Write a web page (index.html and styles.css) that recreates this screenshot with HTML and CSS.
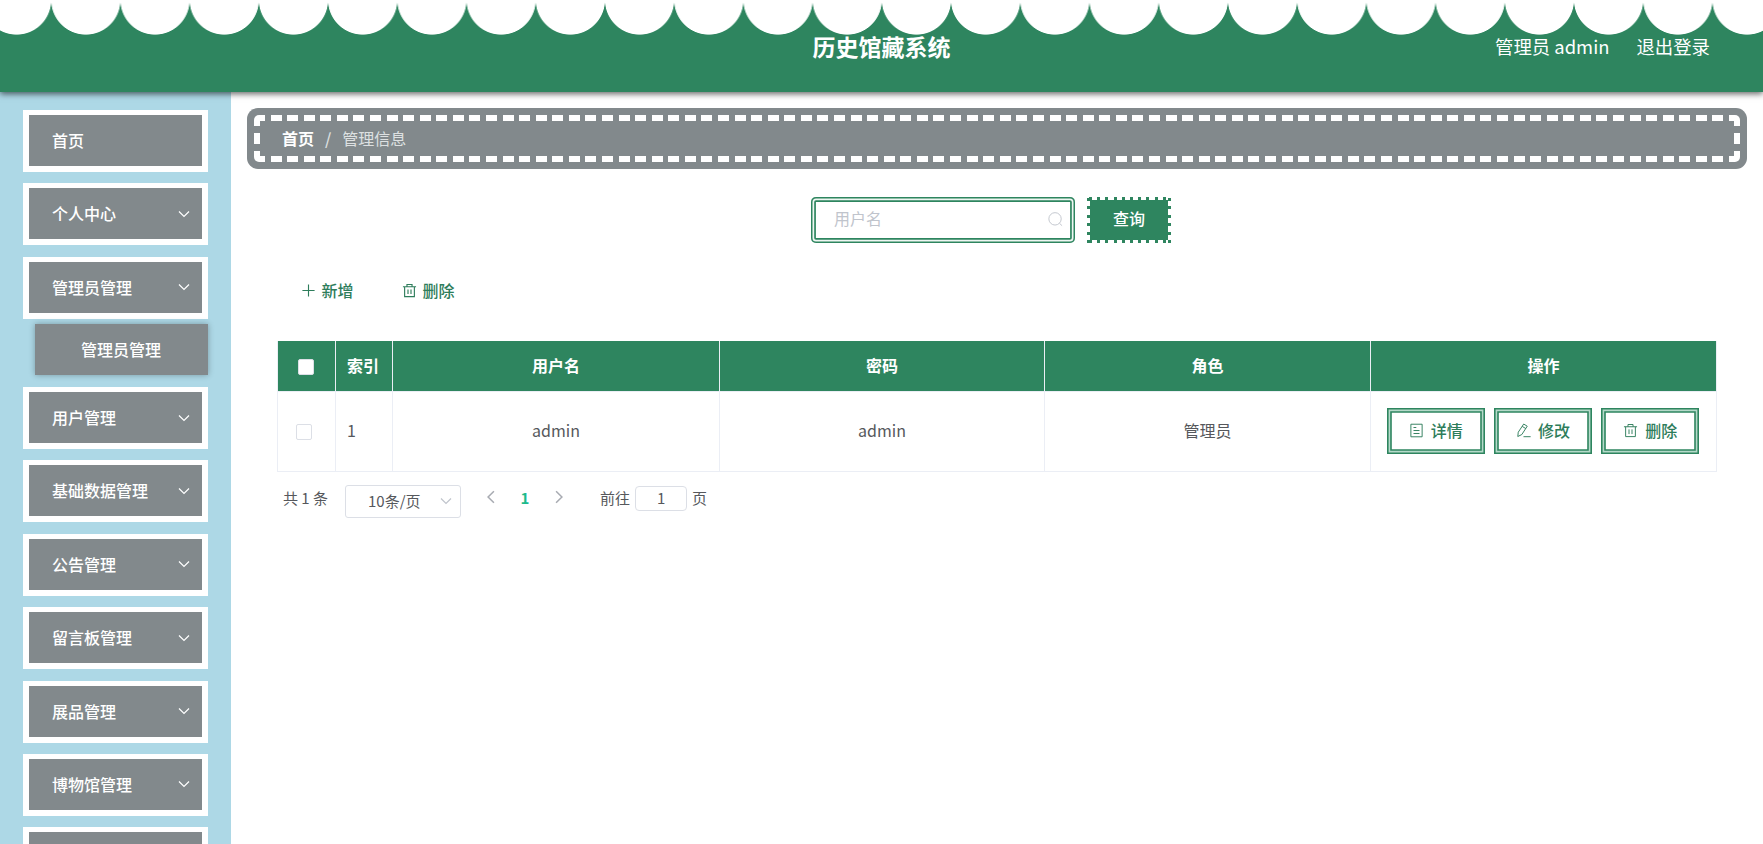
FILE: index.html
```html
<!DOCTYPE html>
<html lang="zh-CN">
<head>
<meta charset="utf-8">
<title>历史馆藏系统</title>
<link rel="stylesheet" href="styles.css">
</head>
<body>
<svg class="sprite" aria-hidden="true">
  <symbol id="down" viewBox="0 0 12 12"><path d="M1 3.5 6 8.5 11 3.5"/></symbol>
  <symbol id="left" viewBox="0 0 12 12"><path d="M8.5 1 3.5 6 8.5 11"/></symbol>
  <symbol id="right" viewBox="0 0 12 12"><path d="M3.5 1 8.5 6 3.5 11"/></symbol>
  <symbol id="plus" viewBox="0 0 16 16"><path d="M8 1.5v13M1.5 8h13"/></symbol>
  <symbol id="trash" viewBox="0 0 16 16"><path d="M1 4h14M2.8 4v10.5h10.4V4M5.3 4V1.6h5.4V4M6.4 6.8v5M9.6 6.8v5"/></symbol>
  <symbol id="doc" viewBox="0 0 16 16"><path d="M2 1.3h12v13.4H2zM4.8 4.8h3M4.8 8h6.4M4.8 11.2h6.4"/></symbol>
  <symbol id="pen" viewBox="0 0 16 16"><path d="M8.2 1.1 12 3.4 6.2 12.3 1.9 14.4 2.4 9.8zM6.6 3.6 10.4 5.9M8 14.6H15.6"/></symbol>
  <symbol id="search" viewBox="0 0 16 16"><circle cx="7.5" cy="7.3" r="6.6"/><path d="M12.2 12 15 14.6"/></symbol>
</svg>

<header class="header">
  <h1 class="title">历史馆藏系统</h1>
  <div class="account"><span>管理员 admin</span><span>退出登录</span></div>
</header>

<div class="layout">
  <nav class="sidebar">
    <div class="item">首页</div>
    <div class="item">个人中心<svg class="arrow"><use href="#down"/></svg></div>
    <div class="item open">管理员管理<svg class="arrow"><use href="#down"/></svg></div>
    <div class="subitem">管理员管理</div>
    <div class="item">用户管理<svg class="arrow"><use href="#down"/></svg></div>
    <div class="item">基础数据管理<svg class="arrow"><use href="#down"/></svg></div>
    <div class="item">公告管理<svg class="arrow"><use href="#down"/></svg></div>
    <div class="item">留言板管理<svg class="arrow"><use href="#down"/></svg></div>
    <div class="item">展品管理<svg class="arrow"><use href="#down"/></svg></div>
    <div class="item">博物馆管理<svg class="arrow"><use href="#down"/></svg></div>
    <div class="item"></div>
  </nav>

  <main class="main">
    <div class="crumbs"><div class="stitch"><b>首页</b><span class="sep">/</span><span class="here">管理信息</span></div></div>

    <div class="search">
      <div class="field"><span>用户名</span><svg class="icon"><use href="#search"/></svg></div>
      <div class="query"><div class="query-face">查询</div></div>
    </div>

    <div class="tools">
      <div class="tool"><svg class="icon"><use href="#plus"/></svg>新增</div>
      <div class="tool"><svg class="icon"><use href="#trash"/></svg>删除</div>
    </div>

    <div class="table">
      <div class="cell head check"><i class="box"></i></div>
      <div class="cell head index">索引</div>
      <div class="cell head">用户名</div>
      <div class="cell head">密码</div>
      <div class="cell head">角色</div>
      <div class="cell head">操作</div>
      <div class="cell check"><i class="box"></i></div>
      <div class="cell index">1</div>
      <div class="cell">admin</div>
      <div class="cell">admin</div>
      <div class="cell">管理员</div>
      <div class="cell ops">
        <div class="btn"><svg class="icon"><use href="#doc"/></svg>详情</div>
        <div class="btn"><svg class="icon"><use href="#pen"/></svg>修改</div>
        <div class="btn"><svg class="icon"><use href="#trash"/></svg>删除</div>
      </div>
    </div>

    <div class="pager">
      <span class="total">共 1 条</span>
      <div class="size"><span>10条/页</span><svg class="arrow"><use href="#down"/></svg></div>
      <svg class="nav"><use href="#left"/></svg>
      <b class="current">1</b>
      <svg class="nav"><use href="#right"/></svg>
      <span class="goto">前往</span>
      <div class="jump">1</div>
      <span>页</span>
    </div>
  </main>
</div>
</body>
</html>
```
FILE: styles.css
```css
* { box-sizing: border-box; }
body {
  margin: 0;
  height: 844px;
  overflow: hidden;
  background: #fff;
  color: #56585c;
  font: 16px/24px "Noto Sans CJK SC", "Noto Sans", sans-serif;
}
svg { fill: none; stroke: currentColor; flex: none; }
.sprite { position: absolute; width: 0; height: 0; }
.icon { width: 15px; height: 15px; }

.header {
  position: relative;
  z-index: 1;
  display: grid;
  grid-template-columns: 1fr auto 1fr;
  align-items: center;
  height: 92px;
  padding-right: 53px;
  padding-left: 53px;
  color: #fff;
  background: radial-gradient(circle at 34.6px 0, #fff 34.2px, #2e855f 35px) -18px 0 / 69.22px 92px repeat-x;
  box-shadow: 0 2px 6px rgba(0, 0, 0, .6);
}
.title { grid-column: 2; margin: 0; font-size: 23px; line-height: 34px; }
.account { display: flex; justify-content: flex-end; gap: 27px; font-size: 18.4px; }

.layout { display: flex; height: 752px; }
.sidebar {
  flex: none;
  width: 231px;
  padding: 18px 23px 0;
  overflow: hidden;
  background: #add8e6;
}
.item {
  display: flex;
  align-items: center;
  justify-content: space-between;
  height: 61.9px;
  margin-bottom: 11.5px;
  padding: 0 12px 1px 23px;
  border: 6px solid #fff;
  border-top-width: 5px;
  background: #82898c;
  color: #fff;
  font-weight: 500;
}
.item.open { margin-bottom: 5.6px; }
.arrow { width: 12px; height: 12px; margin-top: 1px; stroke-width: 1.2; }
.subitem {
  height: 51px;
  margin: 0 0 11.8px 12px;
  padding-left: 46px;
  background: #82898c;
  box-shadow: 0 0 6px rgba(0, 0, 0, .3);
  color: #fff;
  font-weight: 500;
  line-height: 51px;
}

.main { flex: 1; padding: 16px 16px 0; }
.crumbs { height: 60.6px; padding: 7px; border-radius: 11px; background: #82898c; }
.stitch {
  --h: repeating-linear-gradient(90deg, #fff 0 11px, transparent 11px 16.573px);
  --v: repeating-linear-gradient(#fff 0 11px, transparent 11px 18px);
  display: flex;
  align-items: center;
  height: 47px;
  padding: 0 0 2px 28px;
  border-radius: 5px;
  color: #dde0e1;
  background:
    var(--h) top / 100% 6px no-repeat,
    var(--h) bottom / 100% 6px no-repeat,
    var(--v) left / 6px 100% no-repeat,
    var(--v) right / 6px 100% no-repeat;
}
.stitch b { color: #fff; }
.sep { margin: 0 11px; font-weight: 500; }

.search { display: flex; justify-content: center; gap: 12px; margin: 28px 0 0 -12px; }
.field {
  display: flex;
  align-items: center;
  justify-content: space-between;
  width: 264px;
  height: 46px;
  padding: 0 12px 3px 23px;
  border-radius: 5px;
  box-shadow: inset 0 0 0 1.5px #2e855f, inset 0 0 0 3.2px #eef6f2, inset 0 0 0 4.9px #2e855f;
  color: #c0c4cc;
}
.field .icon { margin-top: 2px; }
.query {
  --h: repeating-linear-gradient(90deg, #2e855f 0 3px, transparent 3px 8.2px);
  --v: repeating-linear-gradient(#2e855f 0 3px, transparent 3px 8.4px);
  width: 84px;
  height: 46px;
  padding: 3px;
  background:
    var(--h) 2px 0 / 81px 3px no-repeat,
    var(--h) 2px 100% / 81px 3px no-repeat,
    var(--v) 0 1px / 3px 45px no-repeat,
    var(--v) 100% 1px / 3px 45px no-repeat;
}
.query-face { height: 40px; background: #2e855f; color: #fff; font-weight: 500; line-height: 36px; text-align: center; }

.tools { display: flex; gap: 48px; margin: 35px 0 0 53.5px; color: #2e7d5b; }
.tool { display: flex; align-items: center; gap: 6px; font-weight: 500; }
.tool .icon { margin-top: 2px; stroke-width: 1.2; }

.table {
  display: grid;
  grid-template-columns: 58px 57px 327px 325px 326px 346px;
  grid-template-rows: 51px 80px;
  width: 1440px;
  margin: 39px 0 0 30px;
  border-left: 1px solid #ebeef5;
}
.cell {
  display: flex;
  align-items: center;
  justify-content: center;
  padding-bottom: 2px;
  border-right: 1px solid #ebeef5;
  border-bottom: 1px solid #ebeef5;
}
.head { background: #2e855f; color: #fff; font-weight: 700; }
.index { justify-content: flex-start; padding-left: 11px; }
.box { width: 16px; height: 16px; border: 1px solid #dcdfe6; border-radius: 2px; background: #fff; }
.check .box { margin: 4px 5px 0 0; }
.head .box { margin-right: 1px; }
.ops { gap: 9px; padding: 0 1px 0 0; }
.btn {
  display: flex;
  align-items: center;
  justify-content: center;
  gap: 7px;
  width: 98.3px;
  height: 46px;
  padding-bottom: 3px;
  box-shadow: inset 0 0 0 1.6px #2e855f, inset 0 0 0 3.2px #b5d9c9, inset 0 0 0 4.8px #2e855f;
  color: #2e7d5b;
  font-weight: 500;
}
.btn .icon { margin-top: 1px; }

.pager { display: flex; align-items: center; height: 54px; padding: 0 0 1px 36px; font-size: 15px; }
.size {
  display: flex;
  align-items: center;
  justify-content: space-between;
  width: 116px;
  height: 33px;
  margin: 6px 23px 0 17px;
  padding: 0 8px 1px 22px;
  border: 1px solid #dcdfe6;
  border-radius: 3px;
}
.size .arrow { margin: 0; color: #c0c4cc; }
.nav { width: 14px; height: 14px; margin-top: -2px; color: #a8abb2; stroke-width: 1.3; }
.total, .current, .goto, .jump + span { margin-top: -1px; }
.current { width: 54px; color: #1dba8c; text-align: center; }
.goto { margin-right: 5px; margin-left: 34px; }
.jump { width: 52px; height: 25px; margin-right: 5px; border: 1px solid #dcdfe6; border-radius: 4px; text-align: center; line-height: 22px; }
```
